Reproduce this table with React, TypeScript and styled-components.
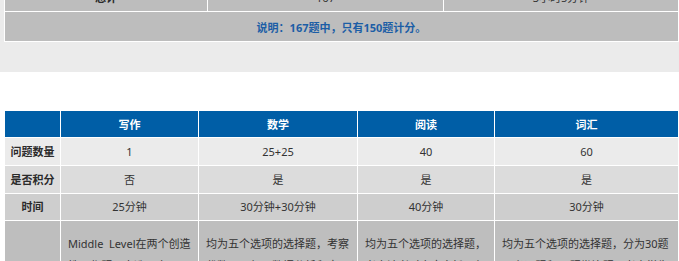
import React from "react";
import styled, { createGlobalStyle } from "styled-components";

const GlobalStyle = createGlobalStyle`
  html, body {
    margin: 0;
    padding: 0;
    overflow: hidden;
    background: #ffffff;
  }
  body {
    font-family: "Noto Sans", "Noto Sans CJK SC", sans-serif;
    color: #333333;
  }
`;

type Subject = {
  name: string;
  count: string;
  scored: string;
  time: string;
  detail: string;
};

const subjects: Subject[] = [
  {
    name: "写作",
    count: "1",
    scored: "否",
    time: "25分钟",
    detail:
      "Middle\u00a0 Level在两个创造性写作题目中选一个，写一篇故事，不计入总分，但会作为写作样本发送给申请的学校。",
  },
  {
    name: "数学",
    count: "25+25",
    scored: "是",
    time: "30分钟+30分钟",
    detail:
      "均为五个选项的选择题，考察代数、几何、数据分析和应用题，分两个部分，每部分各25题，不允许使用计算器。",
  },
  {
    name: "阅读",
    count: "40",
    scored: "是",
    time: "40分钟",
    detail:
      "均为五个选项的选择题，考察读者对文章主旨、细节、推理、词汇和语气的理解，共有七篇左右的文章。",
  },
  {
    name: "词汇",
    count: "60",
    scored: "是",
    time: "30分钟",
    detail:
      "均为五个选项的选择题，分为30题同义词题和30题类比题，考察学生的词汇量和逻辑推理能力。",
  },
];

function App() {
  return (
    <Page>
      <GlobalStyle />
      <Summary>
        <Grid>
          <colgroup>
            <col style={{ width: 202 }} />
            <col style={{ width: 235 }} />
            <col style={{ width: 234 }} />
          </colgroup>
          <tbody>
            <Row $bg="#bdbdbd" $h={27}>
              <Label>总计</Label>
              <Cell>167</Cell>
              <Cell>3小时5分钟</Cell>
            </Row>
            <Row $bg="#bdbdbd" $h={27}>
              <Note colSpan={3}>说明：167题中，只有150题计分。</Note>
            </Row>
          </tbody>
        </Grid>
      </Summary>

      <Details>
        <Grid>
          <colgroup>
            <col style={{ width: 55 }} />
            <col style={{ width: 137 }} />
            <col style={{ width: 158 }} />
            <col style={{ width: 136 }} />
            <col style={{ width: 183 }} />
          </colgroup>
          <thead>
            <Row $bg="#005ea6" $h={26}>
              <Head />
              {subjects.map((s) => (
                <Head key={s.name}>{s.name}</Head>
              ))}
            </Row>
          </thead>
          <tbody>
            <Row $bg="#ebebeb" $h={27}>
              <Label>问题数量</Label>
              {subjects.map((s) => (
                <Cell key={s.name}>{s.count}</Cell>
              ))}
            </Row>
            <Row $bg="#dcdcdc" $h={27}>
              <Label>是否积分</Label>
              {subjects.map((s) => (
                <Cell key={s.name}>{s.scored}</Cell>
              ))}
            </Row>
            <Row $bg="#cecece" $h={26}>
              <Label>时间</Label>
              {subjects.map((s) => (
                <Cell key={s.name}>{s.time}</Cell>
              ))}
            </Row>
            <Row $bg="#bebebe" $h={120}>
              <Label>内容</Label>
              {subjects.map((s) => (
                <TextCell key={s.name}>{s.detail}</TextCell>
              ))}
            </Row>
          </tbody>
        </Grid>
      </Details>
    </Page>
  );
}

const Page = styled.div`
  width: 679px;
`;

const Summary = styled.section`
  background-color: #ebebeb;
  margin-top: -17px;
  padding: 0 0 30px 4px;
`;

const Details = styled.section`
  margin-top: 38px;
  padding-left: 4px;
`;

const Grid = styled.table`
  width: 675px;
  table-layout: fixed;
  border-collapse: separate;
  border-spacing: 1px;
  background-color: #ffffff;
  font-size: 11px;
`;

const Row = styled.tr<{ $bg: string; $h: number }>`
  background-color: ${(p) => p.$bg};

  & > td,
  & > th {
    height: ${(p) => p.$h}px;
  }
`;

const Cell = styled.td`
  padding: 0 4px;
  text-align: center;
  vertical-align: middle;
  line-height: 14px;
  color: #333333;
`;

const Label = styled(Cell)`
  font-weight: bold;
  color: #2b2b2b;
`;

const Head = styled.th`
  padding: 0;
  text-align: center;
  vertical-align: middle;
  font-weight: bold;
  color: #ffffff;
`;

const Note = styled.td`
  text-align: center;
  vertical-align: middle;
  font-weight: bold;
  color: #1c5ea6;
`;

const TextCell = styled.td`
  padding: 12px 3px 12px 7px;
  vertical-align: top;
  text-align: left;
  line-height: 22px;
  color: #333333;
`;

export default App;
